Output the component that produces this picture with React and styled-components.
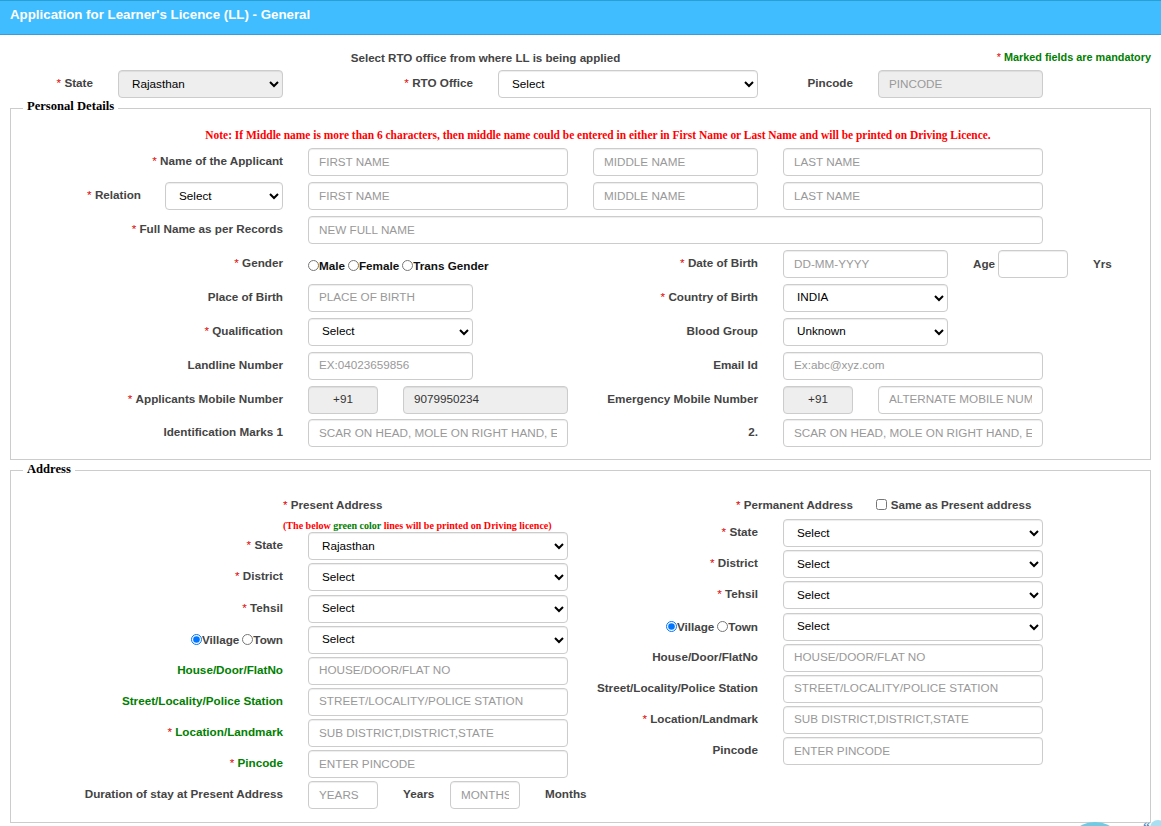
import React from "react";
import styled, { createGlobalStyle } from "styled-components";

const GlobalStyle = createGlobalStyle`
  html, body {
    margin: 0;
    padding: 0;
    background: #fff;
    font-family: "Liberation Sans", Arial, sans-serif;
    font-size: 11.7px;
  }
  * { box-sizing: border-box; }
`;

const Page = styled.div`
  position: relative;
  width: 1161px;
  height: 826px;
  overflow: hidden;
`;

const Header = styled.div`
  height: 35px;
  background: #40bdff;
  border-top: 1px solid #2a9fd6;
  border-bottom: 1px solid #3a9bd8;
  padding: 6px 10px 0;
  color: #fff;
  font-size: 13.3px;
  font-weight: bold;
  line-height: 15px;
`;

const Content = styled.div`
  padding: 15px 10px 0;
`;

const Grid = styled.div`
  display: grid;
  grid-template-columns: repeat(12, 70px);
  column-gap: 25px;
  margin-bottom: ${(p) => p.$gap ?? 5.875}px;
`;

const TopRow = styled(Grid)`
  padding-left: 13px;
  margin-bottom: 1px;
`;

const Intro = styled.div`
  position: relative;
  height: 20px;
  padding-right: 190px;
  text-align: center;
  font-weight: bold;
  color: #444;
  font-size: 11.6px;
  line-height: 15px;
`;

const Mandatory = styled.span`
  position: absolute;
  right: 0;
  top: 0;
  color: #008000;
  font-size: 10.85px;
`;

const Cell = styled.div`
  grid-column: span ${(p) => p.$span || 1};
  display: ${(p) => (p.$flex ? "flex" : "block")};
  align-items: flex-start;
`;

const Label = styled.label`
  display: block;
  grid-column: span ${(p) => p.$span || 1};
  text-align: right;
  font-weight: bold;
  color: ${(p) => (p.$green ? "#008000" : "#444")};
  line-height: 14px;
  padding-top: 6px;
  white-space: nowrap;
`;

const RelationLabel = styled(Label)`
  flex: 0 0 118px;
  margin-right: 24px;
`;

const Star = styled.span`
  color: #d00;
  font-weight: normal;
`;

const Input = styled.input`
  display: block;
  width: 100%;
  height: 28px;
  padding: 0 10px 2px;
  border: 1px solid #ccc;
  border-radius: 4px;
  background: ${(p) => (p.$gray ? "#eee" : "#fff")};
  box-shadow: inset 0 1px 1px rgba(0, 0, 0, 0.075);
  color: #333;
  font-family: inherit;
  font-size: 11.7px;
  outline: none;
  text-align: ${(p) => p.$align || "left"};
  &::placeholder {
    color: #999;
    opacity: 1;
  }
`;

const Select = styled.select`
  display: block;
  width: ${(p) => p.$width || "100%"};
  flex-shrink: 0;
  height: 28px;
  padding: 0 9px 2px;
  border: 1px solid #ccc;
  border-radius: 4px;
  background-color: ${(p) => (p.$gray ? "#eee" : "#fff")};
  box-shadow: inset 0 1px 1px rgba(0, 0, 0, 0.075);
  color: #000;
  font-family: inherit;
  font-size: 11.7px;
`;

const Fieldset = styled.fieldset`
  margin: 0 0 ${(p) => p.$after || 0}px;
  padding: 0 12px;
  width: 1141px;
  min-width: 0;
  border: 1px solid #ccc;
`;

const Legend = styled.legend`
  margin-left: 0;
  padding: 0 4px 4px;
  font-family: "Liberation Serif", serif;
  font-size: 12.6px;
  font-weight: bold;
  line-height: 14px;
  color: #000;
`;

const Note = styled.div`
  height: 31.4px;
  padding: 12px 0 0 35px;
  text-align: center;
  color: #f00;
  font-family: "Liberation Serif", serif;
  font-size: 11.45px;
  font-weight: bold;
  line-height: 13px;
`;

const RadioRow = styled.div`
  display: flex;
  align-items: center;
  padding-top: ${(p) => p.$top || 0}px;
  height: 28px;
  font-size: 11.7px;
  font-weight: bold;
  color: ${(p) => (p.$dark ? "#111" : "#444")};
  line-height: 14px;
  justify-content: ${(p) => (p.$end ? "flex-end" : "flex-start")};
  white-space: nowrap;
`;

const Radio = styled.input.attrs({ type: "radio" })`
  width: 11px;
  height: 11px;
  margin: 0 0 1px 3px;
  &:first-child {
    margin-left: 0;
  }
`;

const Unit = styled.span`
  display: block;
  flex-shrink: 0;
  width: ${(p) => p.$width || "auto"};
  margin-left: ${(p) => p.$left ?? 25}px;
  padding-top: ${(p) => p.$top ?? 6}px;
  line-height: 14px;
  font-weight: bold;
  color: #444;
`;

const FieldBox = styled.div`
  flex-shrink: 0;
  width: 70px;
`;

const Columns = styled.div`
  display: grid;
  grid-template-columns: 545px 545px;
  column-gap: 25px;
  padding-top: 18px;
  height: 342px;
`;

const Heading = styled.div`
  display: flex;
  align-items: center;
  height: 14px;
  margin-left: ${(p) => p.$indent}px;
  font-size: 11.6px;
  font-weight: bold;
  color: #444;
  line-height: 14px;
  white-space: nowrap;
`;

const Same = styled.label`
  display: flex;
  align-items: center;
  margin-left: 23px;
`;

const Check = styled.input.attrs({ type: "checkbox" })`
  width: 11px;
  height: 11px;
  margin: 0 4px 0 0;
`;

const SmallNote = styled.div`
  margin: 8px 0 0 260px;
  height: 12px;
  color: #f00;
  font-family: "Liberation Serif", serif;
  font-size: 10.05px;
  font-weight: bold;
  line-height: 12px;
  white-space: nowrap;
`;

const GreenWord = styled.span`
  color: #008000;
`;

const AddressStack = styled.div`
  margin-top: ${(p) => p.$top}px;
`;

const AddressRow = styled.div`
  display: grid;
  grid-template-columns: ${(p) => p.$label}px 260px;
  column-gap: 25px;
  margin-bottom: 3.14px;
`;

const Arc = styled.div`
  position: absolute;
  left: 1077px;
  top: 822px;
  width: 36px;
  height: 18px;
  border-radius: 50%;
  background: #6fcbe3;
`;

const Bubble = styled.div`
  position: absolute;
  left: 1150px;
  top: 820px;
  width: 16px;
  height: 16px;
  border-radius: 50%;
  background: #a9dff0;
`;

const Quote = styled.span`
  position: absolute;
  left: 1143px;
  top: 821px;
  font-family: "Liberation Serif", serif;
  font-size: 14px;
  font-weight: bold;
  line-height: 14px;
  color: #4a90c2;
`;

const Req = () => <Star>* </Star>;

const presentRows = [
  { label: "State", req: true, value: "Rajasthan" },
  { label: "District", req: true, value: "Select" },
  { label: "Tehsil", req: true, value: "Select" },
  { village: true, value: "Select" },
  { label: "House/Door/FlatNo", green: true, ph: "HOUSE/DOOR/FLAT NO" },
  { label: "Street/Locality/Police Station", green: true, ph: "STREET/LOCALITY/POLICE STATION" },
  { label: "Location/Landmark", req: true, green: true, ph: "SUB DISTRICT,DISTRICT,STATE" },
  { label: "Pincode", req: true, green: true, ph: "ENTER PINCODE" },
];

const permanentRows = [
  { label: "State", req: true, value: "Select" },
  { label: "District", req: true, value: "Select" },
  { label: "Tehsil", req: true, value: "Select" },
  { village: true, value: "Select" },
  { label: "House/Door/FlatNo", ph: "HOUSE/DOOR/FLAT NO" },
  { label: "Street/Locality/Police Station", ph: "STREET/LOCALITY/POLICE STATION" },
  { label: "Location/Landmark", req: true, ph: "SUB DISTRICT,DISTRICT,STATE" },
  { label: "Pincode", ph: "ENTER PINCODE" },
];

const Choice = ({ value, ...rest }) => (
  <Select defaultValue={value} {...rest}>
    <option>{value}</option>
  </Select>
);

const VillageTown = ({ name }) => (
  <RadioRow $end>
    <Radio name={name} defaultChecked />Village<Radio name={name} />Town
  </RadioRow>
);

const AddressRows = ({ rows, labelWidth, group }) =>
  rows.map((row, i) => (
    <AddressRow $label={labelWidth} key={i}>
      {row.village ? (
        <VillageTown name={group} />
      ) : (
        <Label $green={row.green}>
          {row.req && <Req />}
          {row.label}
        </Label>
      )}
      {row.value ? <Choice value={row.value} /> : <Input placeholder={row.ph} />}
    </AddressRow>
  ));

export default function App() {
  return (
    <Page>
      <GlobalStyle />
      <Header>Application for Learner's Licence (LL) - General</Header>
      <Content>
        <Intro>
          Select RTO office from where LL is being applied
          <Mandatory>
            <Star>* </Star>Marked fields are mandatory
          </Mandatory>
        </Intro>
        <TopRow>
          <Label $span={1}><Req />State</Label>
          <Cell $span={2}><Choice $gray value="Rajasthan" /></Cell>
          <Label $span={2}><Req />RTO Office</Label>
          <Cell $span={3}><Choice value="Select" /></Cell>
          <Label $span={1}>Pincode</Label>
          <Cell $span={2}><Input $gray placeholder="PINCODE" disabled /></Cell>
        </TopRow>

        <Fieldset $after={2}>
          <Legend>Personal Details</Legend>
          <Note>
            Note: If Middle name is more than 6 characters, then middle name could be entered in either in First Name or Last Name and will be printed on Driving Licence.
          </Note>

          <Grid>
            <Label $span={3}><Req />Name of the Applicant</Label>
            <Cell $span={3}><Input placeholder="FIRST NAME" /></Cell>
            <Cell $span={2}><Input placeholder="MIDDLE NAME" /></Cell>
            <Cell $span={3}><Input placeholder="LAST NAME" /></Cell>
          </Grid>
          <Grid>
            <Cell $span={3} $flex>
              <RelationLabel><Req />Relation</RelationLabel>
              <Choice $width="118px" value="Select" />
            </Cell>
            <Cell $span={3}><Input placeholder="FIRST NAME" /></Cell>
            <Cell $span={2}><Input placeholder="MIDDLE NAME" /></Cell>
            <Cell $span={3}><Input placeholder="LAST NAME" /></Cell>
          </Grid>
          <Grid>
            <Label $span={3}><Req />Full Name as per Records</Label>
            <Cell $span={8}><Input placeholder="NEW FULL NAME" /></Cell>
          </Grid>
          <Grid>
            <Label $span={3}><Req />Gender</Label>
            <Cell $span={3}>
              <RadioRow $top={3} $dark>
                <Radio name="gender" />Male<Radio name="gender" />Female<Radio name="gender" />Trans Gender
              </RadioRow>
            </Cell>
            <Label $span={2}><Req />Date of Birth</Label>
            <Cell $span={2}><Input placeholder="DD-MM-YYYY" /></Cell>
            <Cell $span={2} $flex>
              <Unit $left={0} $top={7} $width="25px">Age</Unit>
              <FieldBox><Input /></FieldBox>
              <Unit $top={7}>Yrs</Unit>
            </Cell>
          </Grid>
          <Grid>
            <Label $span={3}>Place of Birth</Label>
            <Cell $span={2}><Input placeholder="PLACE OF BIRTH" /></Cell>
            <Label $span={3}><Req />Country of Birth</Label>
            <Cell $span={2}><Choice value="INDIA" /></Cell>
          </Grid>
          <Grid>
            <Label $span={3}><Req />Qualification</Label>
            <Cell $span={2}><Choice value="Select" /></Cell>
            <Label $span={3}>Blood Group</Label>
            <Cell $span={2}><Choice value="Unknown" /></Cell>
          </Grid>
          <Grid>
            <Label $span={3}>Landline Number</Label>
            <Cell $span={2}><Input placeholder="EX:04023659856" /></Cell>
            <Label $span={3}>Email Id</Label>
            <Cell $span={3}><Input placeholder="Ex:abc@xyz.com" /></Cell>
          </Grid>
          <Grid>
            <Label $span={3}><Req />Applicants Mobile Number</Label>
            <Cell $span={1}><Input $gray $align="center" defaultValue="+91" readOnly /></Cell>
            <Cell $span={2}><Input $gray defaultValue="9079950234" readOnly /></Cell>
            <Label $span={2}>Emergency Mobile Number</Label>
            <Cell $span={1}><Input $gray $align="center" defaultValue="+91" readOnly /></Cell>
            <Cell $span={2}><Input placeholder="ALTERNATE MOBILE NUMBER" /></Cell>
          </Grid>
          <Grid $gap={11.6}>
            <Label $span={3}>Identification Marks 1</Label>
            <Cell $span={3}><Input placeholder="SCAR ON HEAD, MOLE ON RIGHT HAND, ETC" /></Cell>
            <Label $span={2}>2.</Label>
            <Cell $span={3}><Input placeholder="SCAR ON HEAD, MOLE ON RIGHT HAND, ETC" /></Cell>
          </Grid>
        </Fieldset>

        <Fieldset>
          <Legend>Address</Legend>
          <Columns>
            <div>
              <Heading $indent={260}><Req />&nbsp;Present Address</Heading>
              <SmallNote>
                (The below <GreenWord>green color</GreenWord> lines will be printed on Driving licence)
              </SmallNote>
              <AddressStack $top={0.3}>
                <AddressRows rows={presentRows} labelWidth={260} group="present" />
                <AddressRow $label={260}>
                  <Label>Duration of stay at Present Address</Label>
                  <Cell $flex>
                    <FieldBox><Input placeholder="YEARS" /></FieldBox>
                    <Unit $width="47px">Years</Unit>
                    <FieldBox><Input placeholder="MONTHS" /></FieldBox>
                    <Unit>Months</Unit>
                  </Cell>
                </AddressRow>
              </AddressStack>
            </div>
            <div>
              <Heading $indent={143}>
                <Req />&nbsp;Permanent Address
                <Same><Check />Same as Present address</Same>
              </Heading>
              <AddressStack $top={7.2}>
                <AddressRows rows={permanentRows} labelWidth={165} group="permanent" />
              </AddressStack>
            </div>
          </Columns>
        </Fieldset>
      </Content>
      <Arc />
      <Bubble />
      <Quote>“</Quote>
    </Page>
  );
}
